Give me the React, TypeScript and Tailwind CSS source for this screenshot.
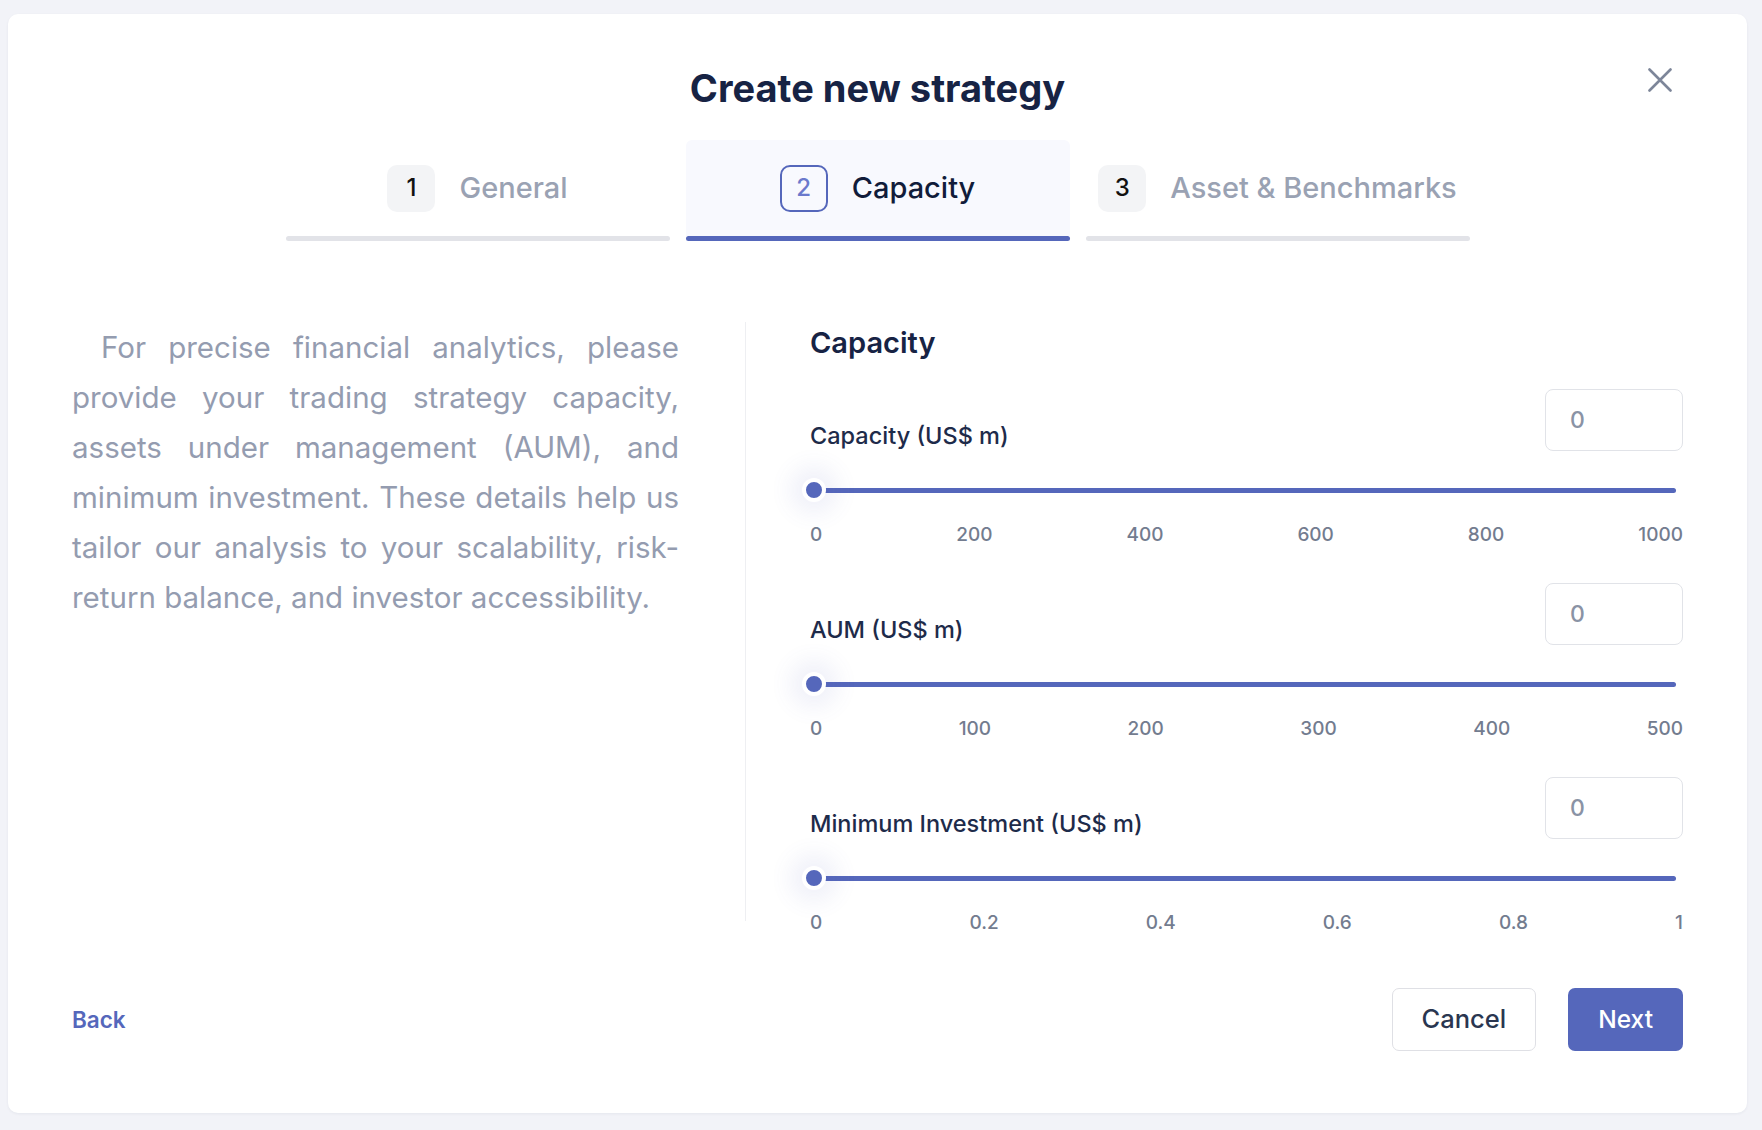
import { useState } from "react";

const FONT = { fontFamily: "Inter, 'Noto Sans', sans-serif" };

const STEPS = [
  { n: 1, label: "General" },
  { n: 2, label: "Capacity" },
  { n: 3, label: "Asset & Benchmarks" },
];

const INTRO = [
  "For precise financial analytics, please",
  "provide your trading strategy capacity,",
  "assets under management (AUM), and",
  "minimum investment. These details help us",
  "tailor our analysis to your scalability, risk-",
  "return balance, and investor accessibility.",
];

const FIELDS = [
  { label: "Capacity (US$ m)", ticks: ["0", "200", "400", "600", "800", "1000"] },
  { label: "AUM (US$ m)", ticks: ["0", "100", "200", "300", "400", "500"] },
  { label: "Minimum Investment (US$ m)", ticks: ["0", "0.2", "0.4", "0.6", "0.8", "1"] },
];

const StepTab = ({ n, label, active }: { n: number; label: string; active: boolean }) => (
  <div className="w-[384px] flex flex-col">
    <div className={`h-[96px] flex items-center justify-center gap-6 rounded-t-md ${active ? "bg-[#f8f9fe]" : ""}`}>
      <div
        className={`w-[48px] h-[47px] rounded-[10px] flex items-center justify-center text-[24px] font-medium ${
          active ? "border-2 border-[#5567bb] text-[#6b79cc]" : "bg-[#f3f4f6] text-[#111111]"
        }`}
      >
        {n}
      </div>
      <span className={`text-[29px] font-medium ${active ? "text-[#111c3a]" : "text-[#9aa2b3]"}`}>{label}</span>
    </div>
    <div className={`h-[5px] rounded-full ${active ? "bg-[#5567bb]" : "bg-[#e2e3e8]"}`} />
  </div>
);

const Field = ({ label, ticks, first }: { label: string; ticks: string[]; first: boolean }) => {
  const [value, setValue] = useState("0");
  return (
    <div className={first ? "mt-[25px]" : "mt-[34px]"}>
      <div className="flex items-end justify-between">
        <span className="text-[23.5px] leading-[30px] font-medium text-[#1e2b4a]">{label}</span>
        <input
          value={value}
          onChange={(e) => setValue(e.target.value)}
          className="w-[138px] h-[62px] rounded-[8px] border-[1.5px] border-[#e1e3e8] pl-[24px] text-[23px] font-medium text-[#8a93a5] outline-none"
          style={FONT}
        />
      </div>
      <div className="relative h-[24px] mt-[27px] flex items-center">
        <div className="ml-[4px] mr-[7px] flex-1 h-[5px] rounded-full bg-[#5567bb]" />
        <div className="absolute left-[-8px] top-0 w-[24px] h-[24px] rounded-full bg-[#5567bb] border-4 border-white shadow-[0_0_22px_12px_rgba(85,103,187,0.09)]" />
      </div>
      <div className="mt-[19px] flex justify-between text-[19px] leading-[28px] font-medium text-[#737c8f]">
        {ticks.map((t) => (
          <span key={t}>{t}</span>
        ))}
      </div>
    </div>
  );
};

export default function App() {
  return (
    <div className="min-h-screen bg-[#f2f3f8] pt-[14px] pl-[8px] pr-[15px] pb-[17px]" style={FONT}>
      <div className="relative bg-white rounded-[10px] shadow-[0_1px_3px_rgba(20,30,60,0.06)] px-16 pt-[52px] pb-[62px]">
        <button className="absolute right-[75px] top-[54px] w-[24px] h-[24px]" aria-label="Close">
          <svg viewBox="0 0 24 24" width="24" height="24" fill="none" stroke="#7d8699" strokeWidth="2.6" strokeLinecap="round">
            <path d="M1.5 1.5 22.5 22.5M22.5 1.5 1.5 22.5" />
          </svg>
        </button>

        <h1 className="text-center text-[38px] leading-[44px] font-bold text-[#172344]">Create new strategy</h1>

        <div className="mt-[30px] flex justify-center gap-4">
          {STEPS.map((s) => (
            <StepTab key={s.n} n={s.n} label={s.label} active={s.n === 2} />
          ))}
        </div>

        <div className="mt-[81px] flex">
          <div className="w-[607px] text-[29.5px] leading-[50px] text-[#949cb0]">
            {INTRO.map((line, i) => (
              <span
                key={i}
                className={`block whitespace-nowrap text-justify ${i < INTRO.length - 1 ? "[text-align-last:justify]" : ""} ${
                  i === 0 ? "pl-[29px]" : ""
                }`}
              >
                {line}
              </span>
            ))}
          </div>

          <div className="ml-[66px] mr-[64px] w-px h-[599px] bg-[#eeeff2]" />

          <div className="flex-1">
            <h2 className="text-[29px] leading-[42px] font-semibold text-[#172344]">Capacity</h2>
            {FIELDS.map((f, i) => (
              <Field key={f.label} label={f.label} ticks={f.ticks} first={i === 0} />
            ))}
          </div>
        </div>

        <div className="mt-[51px] flex items-center justify-between">
          <button className="text-[22.5px] font-semibold text-[#5567bb]">Back</button>
          <div className="flex gap-8">
            <button className="h-[63px] px-[29px] rounded-[7px] border-[1.5px] border-[#dfe0e5] text-[25.5px] font-medium text-[#2a3650]">
              Cancel
            </button>
            <button className="h-[63px] px-[30px] rounded-[7px] bg-[#5567bb] text-[24.5px] font-medium text-white">
              Next
            </button>
          </div>
        </div>
      </div>
    </div>
  );
}
